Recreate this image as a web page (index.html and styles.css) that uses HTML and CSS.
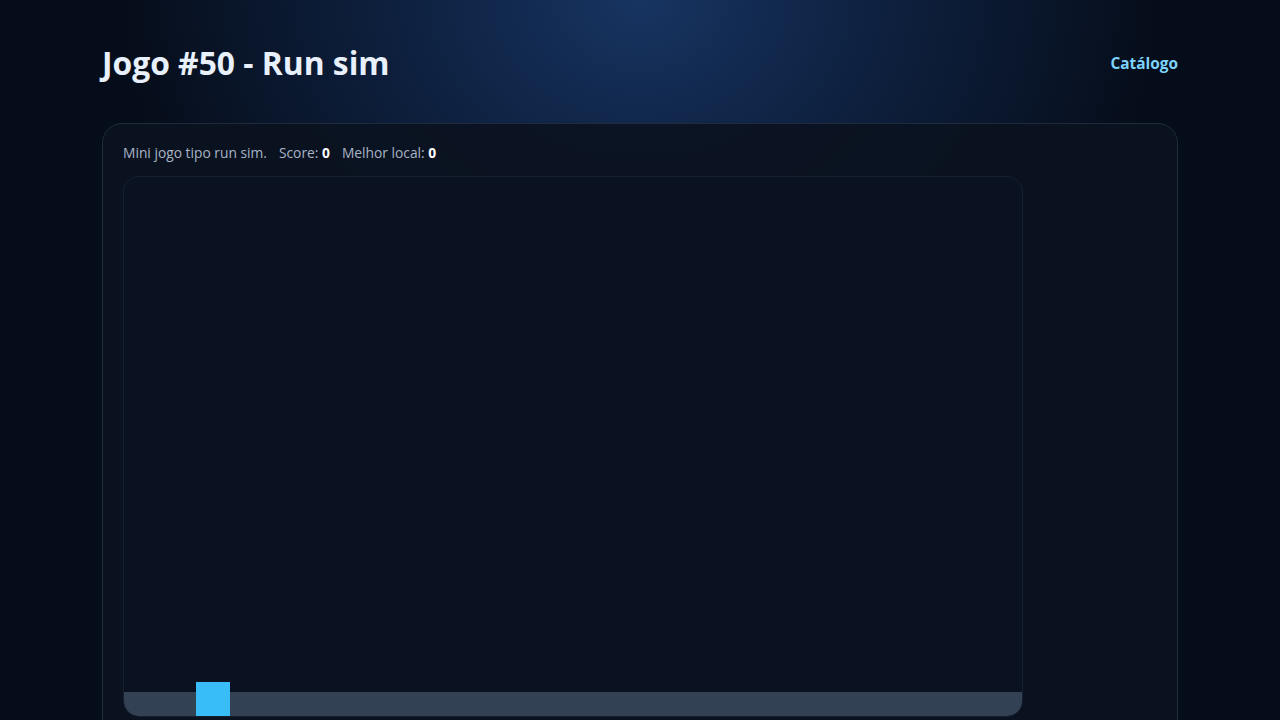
FILE: index.html
```html
<!DOCTYPE html>
<html lang="pt">
<head>
<meta charset="utf-8">
<title>Jogo #50 - Run sim</title>
<link rel="stylesheet" href="styles.css">
</head>
<body>
<div class="wrap">
  <header class="top">
    <h1 class="title">Jogo #50 - Run sim</h1>
    <a class="back" href="#">Catálogo</a>
  </header>
  <section class="card">
    <p class="info">Mini jogo tipo run sim.<span class="gap"></span>Score: <b>0</b><span class="gap"></span>Melhor local: <b>0</b></p>
    <div class="stage">
      <div class="sky"></div>
      <div class="ground">
        <div class="player"></div>
      </div>
    </div>
  </section>
</div>
</body>
</html>
```
FILE: styles.css
```css
* { box-sizing: border-box; }
html, body { margin: 0; height: 100%; }
body {
  background: radial-gradient(ellipse 520px 420px at 50% 0%, #173461 0%, #0e2140 45%, #060d1a 100%), #030812;
  background-color: #030812;
  color: #e2e8f0;
  font-family: "Open Sans", "DejaVu Sans", sans-serif;
  overflow: hidden;
}
.wrap {
  width: 1076px;
  margin: 0 auto;
}
.top {
  display: flex;
  align-items: center;
  justify-content: space-between;
  height: 123px;
  padding-top: 2px;
}
.title {
  margin: 0;
  font-size: 31.8px;
  font-weight: 700;
  color: #e8f0fb;
}
.back {
  color: #7dd3fc;
  text-decoration: none;
  font-weight: 700;
  font-size: 15.4px;
  padding-top: 2px;
}
.card {
  background: rgba(11, 18, 32, 0.92);
  border: 1px solid #1f2a3c;
  border-radius: 20px;
  padding: 19px 20px 0;
  height: 620px;
}
.info {
  margin: 0 0 13px;
  font-size: 13.8px;
  color: #a8b4c6;
  line-height: 20px;
}
.info b { color: #ffffff; font-weight: 700; }
.gap { display: inline-block; width: 12px; }
.stage {
  width: 900px;
  height: 541px;
  border: 1px solid #161f30;
  border-radius: 16px;
  background: #0a1120;
  overflow: hidden;
  display: flex;
  flex-direction: column;
}
.sky { flex: 1; }
.ground {
  height: 24px;
  background: #334155;
  position: relative;
}
.player {
  position: absolute;
  left: 72px;
  bottom: 0;
  width: 34px;
  height: 34px;
  background: #38bdf8;
}
```
